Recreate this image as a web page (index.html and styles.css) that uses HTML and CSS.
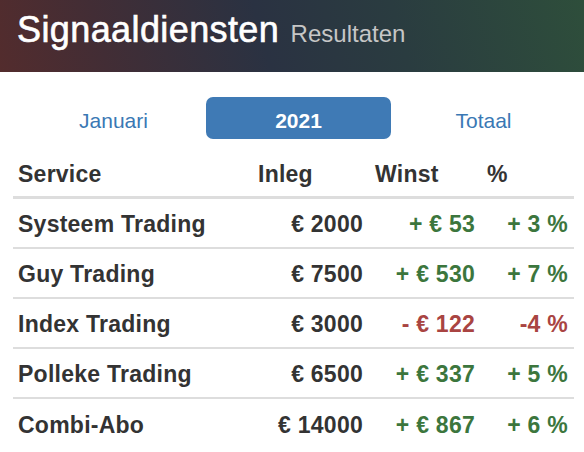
FILE: index.html
```html
<!DOCTYPE html>
<html lang="nl">
<head>
<meta charset="utf-8">
<title>Signaaldiensten - Resultaten</title>
<link rel="stylesheet" href="styles.css">
</head>
<body>
<header class="banner">
  <h1 class="title">Signaaldiensten <small class="subtitle">Resultaten</small></h1>
</header>
<nav class="tabs">
  <a class="tab">Januari</a>
  <a class="tab active">2021</a>
  <a class="tab">Totaal</a>
</nav>
<div class="results">
  <div class="row head">
    <div class="cell">Service</div>
    <div class="cell">Inleg</div>
    <div class="cell">Winst</div>
    <div class="cell">%</div>
  </div>
  <div class="row">
    <div class="cell">Systeem Trading</div>
    <div class="cell num">€ 2000</div>
    <div class="cell num pos">+ € 53</div>
    <div class="cell num pos">+ 3 %</div>
  </div>
  <div class="row">
    <div class="cell">Guy Trading</div>
    <div class="cell num">€ 7500</div>
    <div class="cell num pos">+ € 530</div>
    <div class="cell num pos">+ 7 %</div>
  </div>
  <div class="row">
    <div class="cell">Index Trading</div>
    <div class="cell num">€ 3000</div>
    <div class="cell num neg">- € 122</div>
    <div class="cell num neg">-4 %</div>
  </div>
  <div class="row">
    <div class="cell">Polleke Trading</div>
    <div class="cell num">€ 6500</div>
    <div class="cell num pos">+ € 337</div>
    <div class="cell num pos">+ 5 %</div>
  </div>
  <div class="row">
    <div class="cell">Combi-Abo</div>
    <div class="cell num">€ 14000</div>
    <div class="cell num pos">+ € 867</div>
    <div class="cell num pos">+ 6 %</div>
  </div>
</div>
</body>
</html>
```

FILE: styles.css
```css
* { box-sizing: border-box; }

html, body {
  margin: 0;
  padding: 0;
  background: #fff;
}

body {
  font-family: "Liberation Sans", Arial, Helvetica, sans-serif;
  color: #333;
}

.banner {
  height: 72px;
  padding: 10px 0 0 17px;
  background: linear-gradient(75deg, #532c2d 0%, #422d35 18%, #2a3242 45%, #2a3c40 68%, #2e4e3b 100%);
}

.title {
  margin: 0;
  font-size: 36px;
  line-height: 40px;
  font-weight: normal;
  letter-spacing: 0.4px;
  color: #fff;
  -webkit-text-stroke: 0.6px #fff;
}

.subtitle {
  font-size: 24px;
  letter-spacing: 0;
  color: #c6c6c6;
  -webkit-text-stroke: 0;
  margin-left: 1px;
}

.tabs {
  display: grid;
  grid-template-columns: repeat(3, 185px);
  margin: 25px 0 0 21px;
}

.tab {
  height: 42px;
  padding-top: 6px;
  line-height: 36px;
  text-align: center;
  font-size: 21px;
  color: #3a78b4;
  border-radius: 7px;
}

.tab.active {
  background: #3f7ab5;
  color: #fff;
  font-weight: bold;
}

.results {
  margin: 11px 0 0 13px;
  width: 561px;
}

.row {
  display: grid;
  grid-template-columns: 239px 117px 112px 93px;
  align-items: center;
  height: 50px;
  border-bottom: 2px solid #ddd;
  font-size: 23px;
  font-weight: bold;
  letter-spacing: 0.25px;
  color: #333;
}

.row.head {
  height: 49px;
  border-bottom: 3px solid #ddd;
}

.row:last-child {
  border-bottom: none;
}

.cell {
  padding: 2px 6px 0;
  white-space: nowrap;
}

.cell:first-child {
  padding-left: 5px;
}

.num {
  text-align: right;
}

.pos { color: #3c763d; }
.neg { color: #a94442; }
```
